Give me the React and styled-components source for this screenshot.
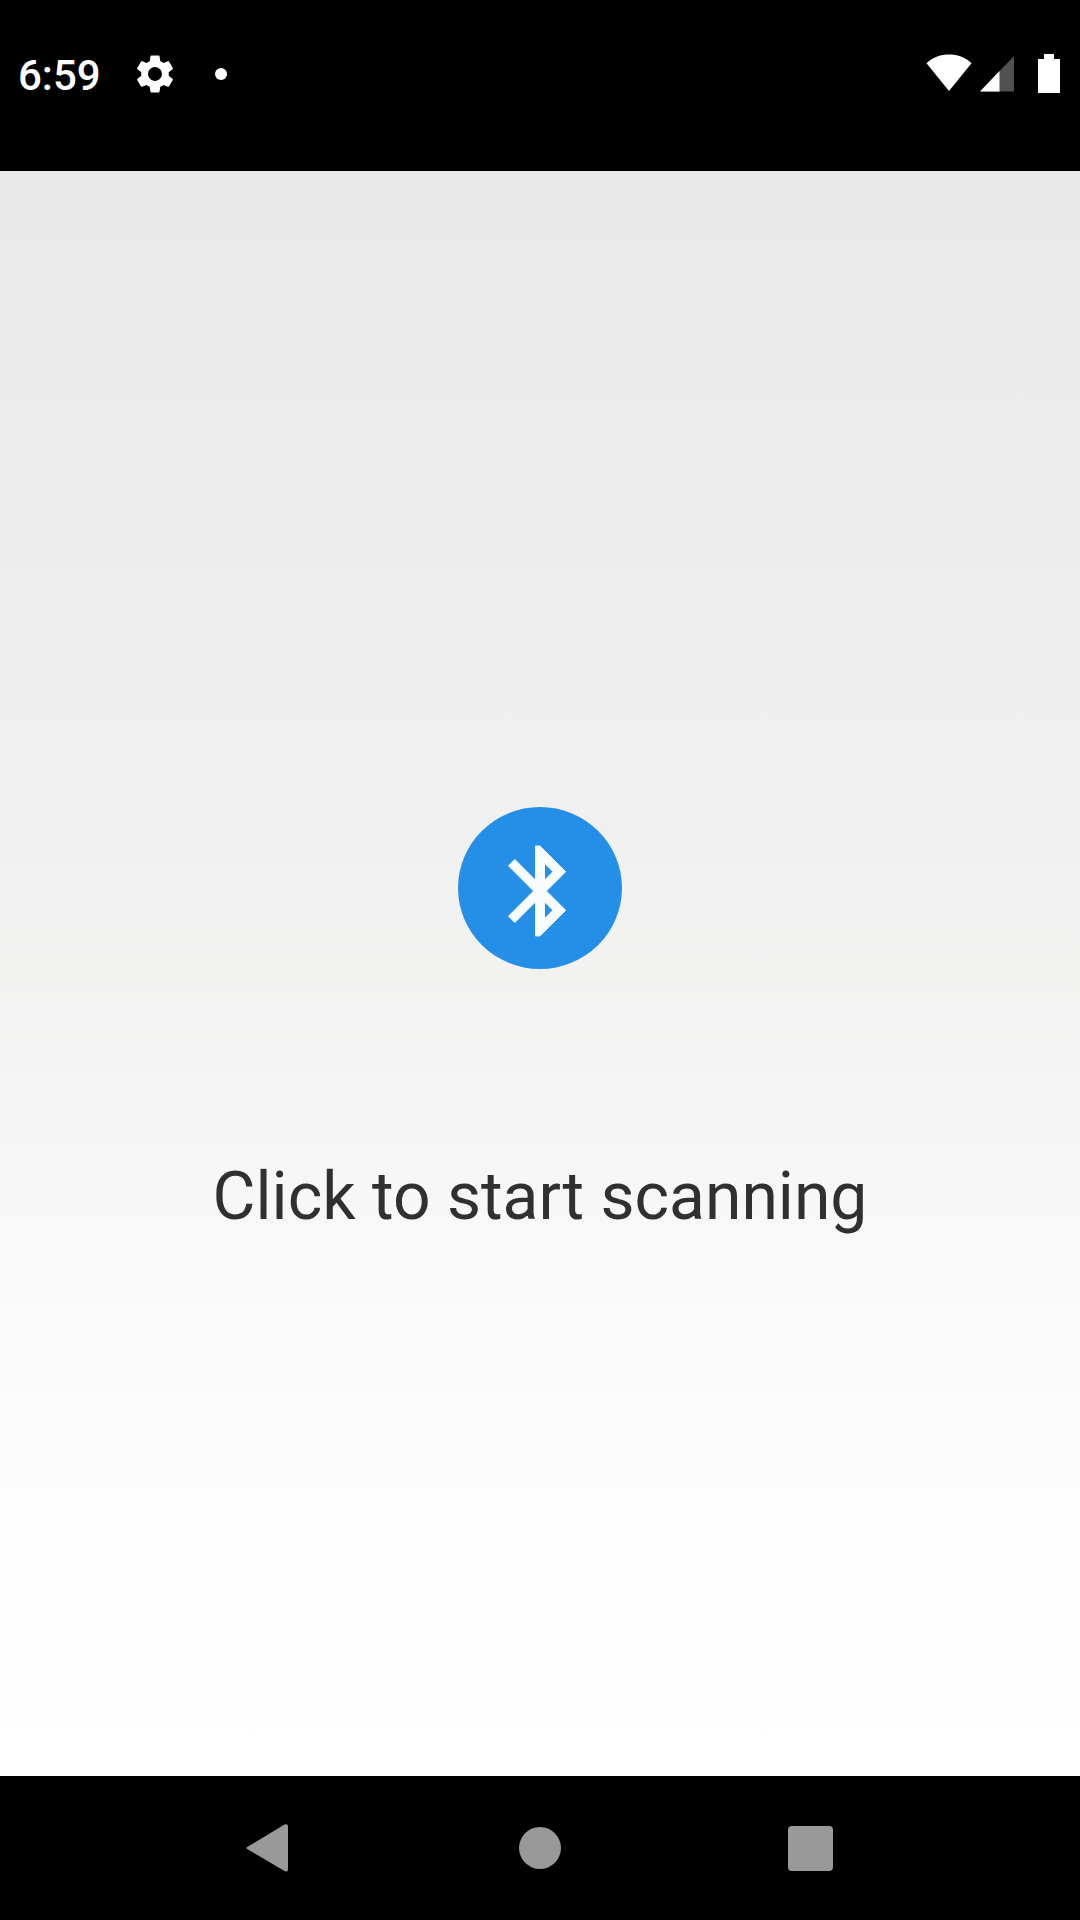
import React from "react";
import styled, { createGlobalStyle } from "styled-components";

const GlobalStyle = createGlobalStyle`
  * { box-sizing: border-box; }
  body { margin: 0; background: #000; }
`;

const Screen = styled.div`
  display: flex;
  flex-direction: column;
  width: 1080px;
  height: 1920px;
  background: #000;
  font-family: Roboto, "Noto Sans", sans-serif;
  overflow: hidden;
`;

const StatusBar = styled.header`
  display: flex;
  justify-content: space-between;
  align-items: flex-start;
  height: 171px;
  padding: 49px 20px 0 18px;
  color: #fff;
`;

const StatusGroup = styled.div`
  display: flex;
  align-items: center;
  height: 49px;
`;

const Clock = styled.span`
  width: 114px;
  font-size: 42px;
  font-weight: 500;
  line-height: 49px;
  padding-top: 4px;
`;

const Dot = styled.span`
  width: 12px;
  height: 12px;
  margin-left: 37px;
  border-radius: 50%;
  background: #fff;
`;

const StatusIcon = styled.svg`
  display: block;
  flex: none;
  margin-left: ${(p) => p.$gap || 0}px;
`;

const Main = styled.main`
  display: flex;
  flex-direction: column;
  align-items: center;
  height: 1605px;
  padding-top: 636px;
  background: linear-gradient(180deg, #e9e9e9 0%, #eeeeee 29%, #f2f2f1 50%, #f8f8f8 66%, #fdfdfd 82%, #ffffff 100%);
`;

const ScanButton = styled.button`
  display: flex;
  justify-content: center;
  align-items: center;
  width: 164px;
  height: 162px;
  padding: 6px 0 0;
  border: 0;
  border-radius: 50%;
  background: #258fe8;
  color: #f8fcff;
`;

const Prompt = styled.p`
  margin: 189px 0 0;
  color: #303030;
  font-size: 66px;
  font-weight: 400;
  line-height: 78px;
  white-space: nowrap;
`;

const NavBar = styled.nav`
  display: grid;
  grid-template-columns: repeat(3, 270px);
  justify-content: center;
  height: 144px;
  padding-top: 47px;
`;

const NavButton = styled.button`
  display: flex;
  justify-content: center;
  align-items: center;
  height: 50px;
  padding: 0 ${(p) => p.$nudge || 0}px 0 0;
  border: 0;
  background: transparent;
  color: #999;
`;

export default function App() {
  return (
    <Screen>
      <GlobalStyle />
      <StatusBar>
        <StatusGroup>
          <Clock>6:59</Clock>
          <StatusIcon width="46" height="46" viewBox="0 0 24 24" fill="currentColor">
            <path d="M19.14 12.94c.04-.3.06-.61.06-.94 0-.32-.02-.64-.07-.94l2.03-1.58c.18-.14.23-.41.12-.61l-1.92-3.32c-.12-.22-.37-.29-.59-.22l-2.39.96c-.5-.38-1.03-.7-1.62-.94l-.36-2.54c-.04-.24-.24-.41-.48-.41h-3.84c-.24 0-.43.17-.47.41l-.36 2.54c-.59.24-1.13.57-1.62.94l-2.39-.96c-.22-.08-.47 0-.59.22L2.74 8.87c-.12.21-.08.47.12.61l2.03 1.58c-.05.3-.09.63-.09.94s.02.64.07.94l-2.03 1.58c-.18.14-.23.41-.12.61l1.92 3.32c.12.22.37.29.59.22l2.39-.96c.5.38 1.03.7 1.62.94l.36 2.54c.05.24.24.41.48.41h3.84c.24 0 .44-.17.47-.41l.36-2.54c.59-.24 1.13-.56 1.62-.94l2.39.96c.22.08.47 0 .59-.22l1.92-3.32c.12-.22.07-.47-.12-.61l-2.01-1.58zM12 15.6c-1.98 0-3.6-1.62-3.6-3.6s1.62-3.6 3.6-3.6 3.6 1.62 3.6 3.6-1.62 3.6-3.6 3.6z" />
          </StatusIcon>
          <Dot />
        </StatusGroup>
        <StatusGroup>
          <StatusIcon width="46" height="39" viewBox="0 0 46 39" fill="currentColor">
            <path d="M0.5 9.2C7 3 15 0.5 23 0.5S39 3 45.5 9.2L23 37z" />
          </StatusIcon>
          <StatusIcon $gap={8} width="35" height="39" viewBox="0 0 35 39">
            <path d="M34 2v35.5H0z" fill="#505050" />
            <path d="M19.5 17v20.5H0z" fill="#fff" />
          </StatusIcon>
          <StatusIcon $gap={23} width="22" height="39" viewBox="0 0 22 39" fill="currentColor">
            <path d="M6 0h10v5h6v34H0V5h6z" />
          </StatusIcon>
        </StatusGroup>
      </StatusBar>
      <Main>
        <ScanButton aria-label="Start scanning">
          <svg width="108" height="108" viewBox="0 0 24 24" fill="currentColor" stroke="currentColor" strokeWidth="0.22">
            <path d="M17.71 7.71L12 2h-1v7.59L6.41 5 5 6.41 10.59 12 5 17.59 6.41 19 11 14.41V22h1l5.71-5.71-4.3-4.29 4.3-4.29zM13 5.83l1.88 1.88L13 9.59V5.83zm1.88 10.46L13 18.17v-3.76l1.88 1.88z" />
          </svg>
        </ScanButton>
        <Prompt>Click to start scanning</Prompt>
      </Main>
      <NavBar>
        <NavButton aria-label="Back" $nudge={6}>
          <svg width="44" height="50" viewBox="0 0 44 50" fill="currentColor">
            <path d="M3 23.5 39.5 1.6Q43 0.2 43 3.5V46.5Q43 49.5 39.5 48L3 26.5Q0 25 3 23.5z" />
          </svg>
        </NavButton>
        <NavButton aria-label="Home">
          <svg width="42" height="42" viewBox="0 0 42 42" fill="currentColor">
            <circle cx="21" cy="21" r="21" />
          </svg>
        </NavButton>
        <NavButton aria-label="Recents">
          <svg width="45" height="45" viewBox="0 0 45 45" fill="currentColor">
            <rect width="45" height="45" rx="4" />
          </svg>
        </NavButton>
      </NavBar>
    </Screen>
  );
}
